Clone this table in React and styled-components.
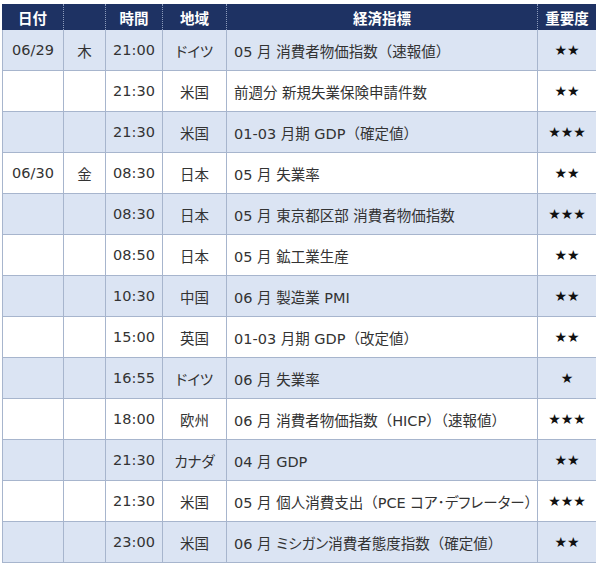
import React from 'react';
import styled, { createGlobalStyle } from 'styled-components';

const GlobalStyle = createGlobalStyle`
  body {
    margin: 0;
    background: #fff;
    font-family: "DejaVu Sans", "Noto Sans CJK JP", sans-serif;
    color: #333;
  }
`

const cols = '62px 42px 57px 64px 311px 58px'

const Table = styled.div`
  width: 594px;
  margin: 4px 0 0 2px;
  font-size: 14.5px;
`

const HeadRow = styled.div`
  display: grid;
  grid-template-columns: ${cols};
  height: 26px;
  background: #1e3263;
`

const HeadCell = styled.div`
  display: flex;
  align-items: center;
  justify-content: center;
  color: #fff;
  font-weight: bold;
  font-family: "Noto Sans CJK JP", sans-serif;
  font-size: 14.5px;
  border-right: ${p => (p.last ? 'none' : '1px dotted #8c9bbb')};
`

const Row = styled.div`
  display: grid;
  grid-template-columns: ${cols};
  height: 41px;
  background: ${p => (p.shaded ? '#dbe4f3' : '#fff')};
`

const Cell = styled.div`
  display: flex;
  align-items: center;
  justify-content: ${p => (p.left ? 'flex-start' : 'center')};
  padding-left: ${p => (p.left ? '7px' : '0')};
  box-sizing: border-box;
  border-bottom: 1px solid #a7b5cd;
  border-right: ${p => (p.last ? 'none' : '1px solid #a7b5cd')};
  border-left: ${p => (p.first ? '1px solid #a7b5cd' : 'none')};
  white-space: pre;
`

// katakana set tighter, as in the source table
const Kana = styled.span`
  font-feature-settings: "palt";
`

const Stars = styled.span`
  font-family: "DejaVu Sans", sans-serif;
  font-size: 14px;
  color: #111;
`

const rows = [
  ['06/29', '木', '21:00', 'ドイツ', '05 月 消費者物価指数（速報値）', 2],
  ['', '', '21:30', '米国', '前週分 新規失業保険申請件数', 2],
  ['', '', '21:30', '米国', '01-03 月期 GDP（確定値）', 3],
  ['06/30', '金', '08:30', '日本', '05 月 失業率', 2],
  ['', '', '08:30', '日本', '05 月 東京都区部 消費者物価指数', 3],
  ['', '', '08:50', '日本', '05 月 鉱工業生産', 2],
  ['', '', '10:30', '中国', '06 月 製造業 PMI', 2],
  ['', '', '15:00', '英国', '01-03 月期 GDP（改定値）', 2],
  ['', '', '16:55', 'ドイツ', '06 月 失業率', 1],
  ['', '', '18:00', '欧州', '06 月 消費者物価指数（HICP）（速報値）', 3],
  ['', '', '21:30', 'カナダ', '04 月 GDP', 2],
  ['', '', '21:30', '米国', '05 月 個人消費支出（PCE コア･デフレーター）', 3],
  ['', '', '23:00', '米国', '06 月 ミシガン消費者態度指数（確定値）', 2],
]

const kanaRe = /([\u30A0-\u30FF\uFF65]+)/

const Text = ({ children }) =>
  children.split(kanaRe).map((part, i) =>
    i % 2 ? <Kana key={i}>{part}</Kana> : part
  )

export default function App() {
  return (
    <>
      <GlobalStyle />
      <Table>
        <HeadRow>
          <HeadCell>日付</HeadCell>
          <HeadCell></HeadCell>
          <HeadCell>時間</HeadCell>
          <HeadCell>地域</HeadCell>
          <HeadCell>経済指標</HeadCell>
          <HeadCell last>重要度</HeadCell>
        </HeadRow>
        {rows.map((r, i) => (
          <Row key={i} shaded={i % 2 === 0}>
            <Cell first>{r[0]}</Cell>
            <Cell>{r[1]}</Cell>
            <Cell>{r[2]}</Cell>
            <Cell><Text>{r[3]}</Text></Cell>
            <Cell left><Text>{r[4]}</Text></Cell>
            <Cell last><Stars>{'★'.repeat(r[5])}</Stars></Cell>
          </Row>
        ))}
      </Table>
    </>
  )
}
